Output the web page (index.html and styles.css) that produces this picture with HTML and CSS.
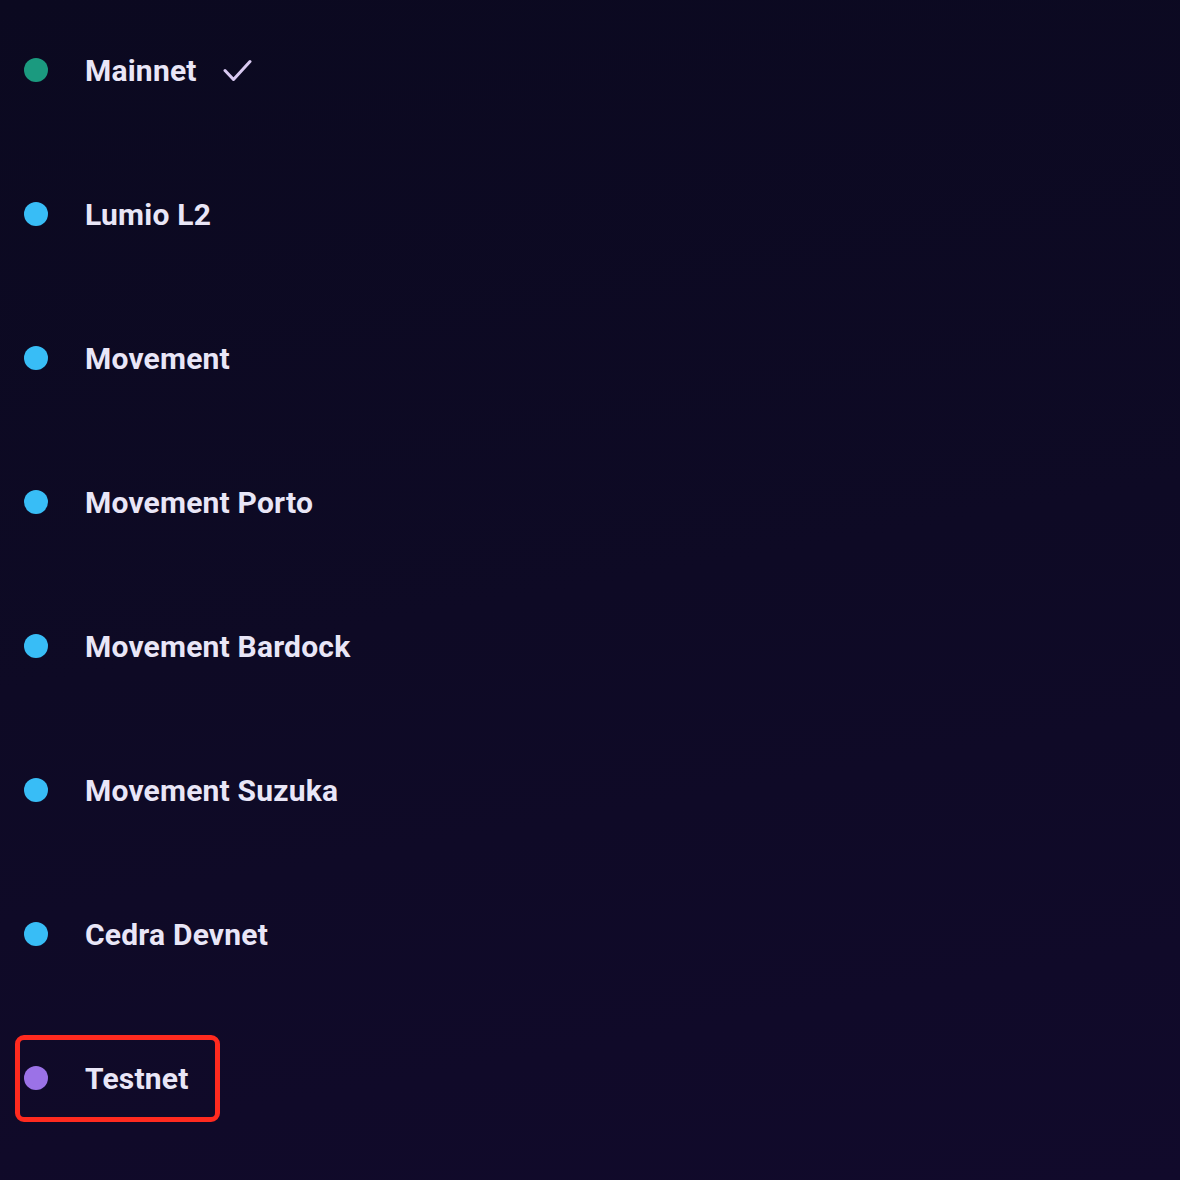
FILE: index.html
```html
<!DOCTYPE html>
<html lang="en">
<head>
<meta charset="utf-8">
<title>Networks</title>
<link rel="stylesheet" href="styles.css">
</head>
<body>
<ul class="network-list">
  <li class="network">
    <span class="dot dot-mainnet"></span>
    <span class="name">Mainnet</span>
    <svg class="check" width="30" height="26" viewBox="0 0 30 26" aria-hidden="true"><path d="M2 12.5 L10.5 21.5 L27 3.5" fill="none" stroke="#d9c9f1" stroke-width="3" stroke-linecap="round" stroke-linejoin="round"/></svg>
  </li>
  <li class="network"><span class="dot dot-l2"></span><span class="name">Lumio L2</span></li>
  <li class="network"><span class="dot dot-l2"></span><span class="name">Movement</span></li>
  <li class="network"><span class="dot dot-l2"></span><span class="name">Movement Porto</span></li>
  <li class="network"><span class="dot dot-l2"></span><span class="name">Movement Bardock</span></li>
  <li class="network"><span class="dot dot-l2"></span><span class="name">Movement Suzuka</span></li>
  <li class="network"><span class="dot dot-l2"></span><span class="name">Cedra Devnet</span></li>
  <li class="network highlighted"><span class="dot dot-testnet"></span><span class="name">Testnet</span></li>
</ul>
</body>
</html>
```
FILE: styles.css
```css
html, body {
  margin: 0;
  padding: 0;
}
body {
  width: 1180px;
  height: 1180px;
  overflow: hidden;
  background: linear-gradient(170deg, #0b0920 0%, #0e0a25 50%, #110a2b 100%);
  font-family: Roboto, "Noto Sans", sans-serif;
}
.network-list {
  list-style: none;
  margin: 0;
  padding: 0;
  display: flex;
  flex-direction: column;
  gap: 4px;
}
.network {
  position: relative;
  height: 140px;
  display: flex;
  align-items: center;
  padding-left: 24px;
}
.dot {
  width: 24px;
  height: 24px;
  border-radius: 50%;
  flex: none;
}
.dot-mainnet { background: #1b9a7f; }
.dot-l2 { background: #38bdf6; }
.dot-testnet { background: #9b72e7; }
.name {
  margin-left: 37px;
  font-size: 30px;
  font-weight: 700;
  color: #e9e6f7;
  letter-spacing: 0.2px;
}
.check {
  margin-left: 26px;
  margin-top: 2px;
  display: block;
}
.highlighted::after {
  content: "";
  position: absolute;
  left: 15px;
  top: 27px;
  width: 205px;
  height: 87px;
  box-sizing: border-box;
  border: 5px solid #ff2a1f;
  border-radius: 9px;
}
```
